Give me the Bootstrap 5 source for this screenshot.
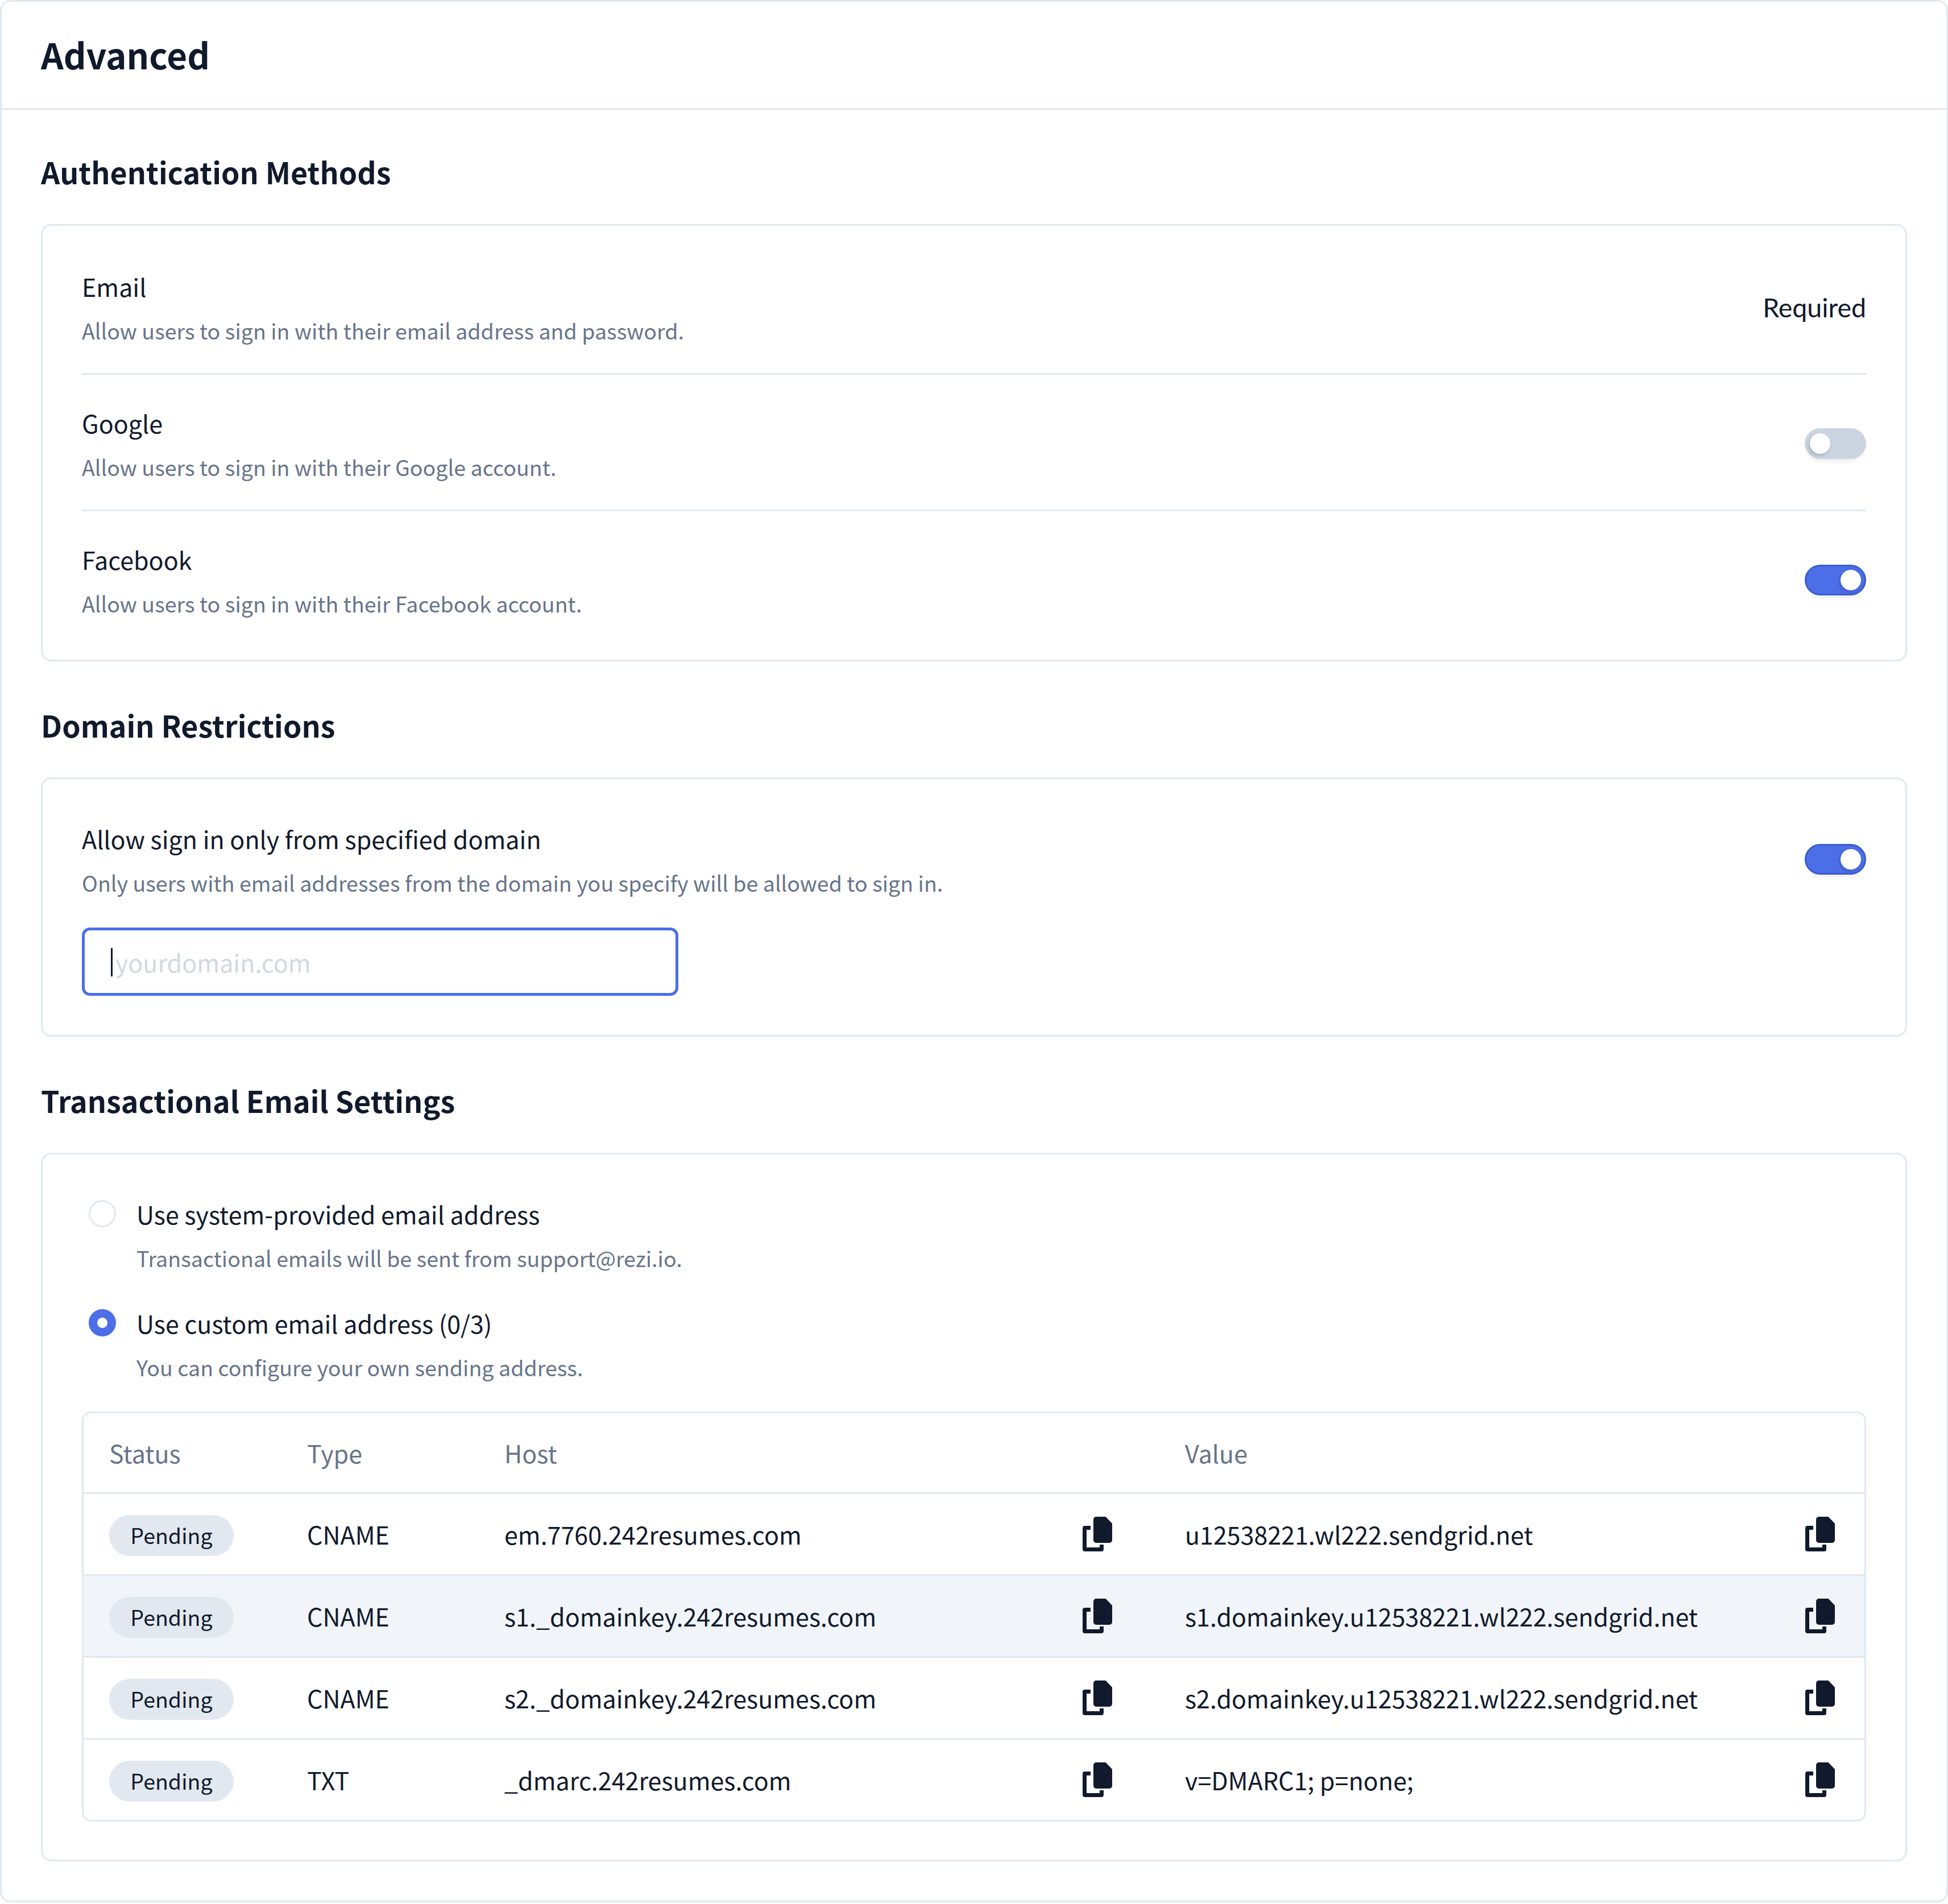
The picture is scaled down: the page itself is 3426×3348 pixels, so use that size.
<!DOCTYPE html>
<html lang="en">
<head>
    <meta charset="UTF-8">
    <meta name="viewport" content="width=device-width, initial-scale=1.0">
    <title>Advanced</title>
    <link href="https://cdn.jsdelivr.net/npm/bootstrap@5.3.0/dist/css/bootstrap.min.css" rel="stylesheet">
    <style>
        body { background: #fff; color: #111a2c; font-family: "Noto Sans CJK SC", "Noto Sans", sans-serif; font-size: 43px; line-height: 76px; }

        .page-panel { --bs-card-border-width: 3px; --bs-card-border-color: #e2e8f0; --bs-card-border-radius: 18px; --bs-card-inner-border-radius: 15px; }
        .page-panel > .card-header { background: #fff; border-bottom: 3px solid #e2e8f0; height: 190px; padding: 0 72px 4px; display: flex; align-items: center; }
        .page-title { font-size: 62px; font-weight: 700; line-height: 88px; margin: 0; margin-left: -3px; }
        .page-panel > .card-body { padding: 73px 69px 69px; }

        .section-title { font-size: 52px; font-weight: 700; line-height: 72px; margin: 0 0 56px; }
        .box { --bs-card-border-width: 3px; --bs-card-border-color: #e2e8f0; --bs-card-border-radius: 18px; margin-bottom: 76px; }
        .box:last-child { margin-bottom: 0; }
        .box-auth { padding: 22px 69px 24px; }
        .box-domain { padding: 66px 69px 69px; }
        .box-mail { padding: 66px 69px 67px; }

        .method-row { padding: 46px 0 37px; border-bottom: 3px solid #e2e8f0; }
        .method-row:last-child { border-bottom: 0; }
        .opt-label { font-size: 43px; line-height: 76px; }
        .opt-hint { font-size: 37.6px; line-height: 76px; color: #67748a; margin-top: 2px; }
        .required-text { font-family: Lato, sans-serif; font-size: 46.5px; margin-bottom: 4px; }
        .form-switch { margin-bottom: 4px !important; }

        .form-switch .switcher { width: 108px; height: 54px; margin: 0; float: none; border: 0; background-color: #cbd5e1; border-radius: 27px;
            background-size: 54px 54px; background-position: left 0 center;
            background-image: url("data:image/svg+xml,%3csvg xmlns='http://www.w3.org/2000/svg' viewBox='0 0 54 54'%3e%3cdefs%3e%3cfilter id='b' x='-50%25' y='-50%25' width='200%25' height='200%25'%3e%3cfeGaussianBlur stdDeviation='3'/%3e%3c/filter%3e%3c/defs%3e%3ccircle cx='25' cy='30' r='18' fill='%230f172a' fill-opacity='.18' filter='url(%23b)'/%3e%3ccircle cx='27' cy='27' r='18' fill='%23fff'/%3e%3c/svg%3e");
            box-shadow: 0 8px 12px -6px rgba(15, 23, 42, .1); }
        .form-switch .switcher:checked { background-color: #4c6fe8; border: 3px solid #3a5cd2; background-position: right -3px center;
            background-image: url("data:image/svg+xml,%3csvg xmlns='http://www.w3.org/2000/svg' viewBox='0 0 54 54'%3e%3cdefs%3e%3cfilter id='b' x='-50%25' y='-50%25' width='200%25' height='200%25'%3e%3cfeGaussianBlur stdDeviation='3'/%3e%3c/filter%3e%3c/defs%3e%3ccircle cx='25' cy='30' r='18' fill='%230f172a' fill-opacity='.18' filter='url(%23b)'/%3e%3ccircle cx='27' cy='27' r='18' fill='%23fff'/%3e%3c/svg%3e"); }
        .form-switch .switcher:focus { box-shadow: 0 8px 12px -6px rgba(15, 23, 42, .1); border-color: #3a5cd2; }

        .domain-field { width: 1049px; margin-top: 41px; }
        .domain-field .form-control { height: 120px; border: 5px solid #4c6fe8; border-radius: 14px; padding: 0 54px; font-size: 43px; box-shadow: none; color: #111a2c; }
        .domain-field .form-control::placeholder { color: #d3d8e1; }
        .text-caret { position: absolute; left: 51px; top: 36px; width: 3px; height: 50px; background: #111a2c; }

        .pick-row { gap: 36px; margin-left: 12px; margin-bottom: 38px; }
        .pick-row .form-check-input { width: 48px; height: 48px; margin: 14px 0 0; flex: none; border: 3px solid #e2e8f0; }
        .pick-row .form-check-input:checked { background-color: #4c6fe8; border-color: #4c6fe8; background-image: radial-gradient(circle, #fff 8.5px, transparent 9.5px); }

        .record-wrap { border: 3px solid #e2e8f0; border-radius: 16px; overflow: hidden; margin-top: 2px; }
        .record-table { table-layout: fixed; width: 100%; margin: 0; --bs-table-border-color: #e2e8f0; font-size: 43px; }
        .record-table th, .record-table td { padding: 0 0 0 48px; vertical-align: middle; border-bottom: 3px solid #e2e8f0; color: #111a2c; background: transparent; box-shadow: none; line-height: 76px; }
        .record-table th { height: 140px; color: #67748a; font-weight: 400; }
        .record-table td { height: 144px; }
        .record-table tr:last-child td { border-bottom: 0; height: 143px; }
        .record-table th:first-child, .record-table td:first-child { padding-left: 45px; }
        .record-table tr.row-hover td { background: #f1f5f9; }
        .col-status { width: 345px; }
        .col-type { width: 347px; }
        .col-host { width: 1197px; }
        .cell-host { padding-right: 80px !important; }
        .cell-value { padding-right: 52px !important; }
        .status-pill { display: inline-block; background: #e2e8f0; border-radius: 36px; height: 72px; line-height: 70px; width: 219px; text-align: center; font-size: 37.6px; }
        .copy-icon { width: 52px; height: 61px; fill: #111a2c; flex: none; }
    </style>
</head>
<body>
    <div class="card page-panel">
        <div class="card-header">
            <h1 class="page-title">Advanced</h1>
        </div>
        <div class="card-body">

            <h2 class="section-title">Authentication Methods</h2>
            <div class="card box box-auth">
                <div class="method-row d-flex justify-content-between align-items-center">
                    <div>
                        <div class="opt-label">Email</div>
                        <div class="opt-hint">Allow users to sign in with their email address and password.</div>
                    </div>
                    <span class="required-text">Required</span>
                </div>
                <div class="method-row d-flex justify-content-between align-items-center">
                    <div>
                        <div class="opt-label">Google</div>
                        <div class="opt-hint">Allow users to sign in with their Google account.</div>
                    </div>
                    <div class="form-check form-switch m-0 p-0 d-flex"><input class="form-check-input switcher" type="checkbox" aria-label="Google"></div>
                </div>
                <div class="method-row d-flex justify-content-between align-items-center">
                    <div>
                        <div class="opt-label">Facebook</div>
                        <div class="opt-hint">Allow users to sign in with their Facebook account.</div>
                    </div>
                    <div class="form-check form-switch m-0 p-0 d-flex"><input class="form-check-input switcher" type="checkbox" aria-label="Facebook" checked></div>
                </div>
            </div>

            <h2 class="section-title">Domain Restrictions</h2>
            <div class="card box box-domain">
                <div class="d-flex justify-content-between align-items-center">
                    <div>
                        <div class="opt-label">Allow sign in only from specified domain</div>
                        <div class="opt-hint">Only users with email addresses from the domain you specify will be allowed to sign in.</div>
                    </div>
                    <div class="form-check form-switch m-0 p-0 d-flex"><input class="form-check-input switcher" type="checkbox" aria-label="Domain restriction" checked></div>
                </div>
                <div class="domain-field position-relative">
                    <input class="form-control" type="text" placeholder="yourdomain.com">
                    <span class="text-caret"></span>
                </div>
            </div>

            <h2 class="section-title">Transactional Email Settings</h2>
            <div class="card box box-mail">
                <div class="pick-row d-flex">
                    <input class="form-check-input" type="radio" name="mailSource" aria-label="System address">
                    <div>
                        <div class="opt-label">Use system-provided email address</div>
                        <div class="opt-hint">Transactional emails will be sent from support@rezi.io.</div>
                    </div>
                </div>
                <div class="pick-row d-flex">
                    <input class="form-check-input" type="radio" name="mailSource" aria-label="Custom address" checked>
                    <div>
                        <div class="opt-label">Use custom email address (0/3)</div>
                        <div class="opt-hint">You can configure your own sending address.</div>
                    </div>
                </div>

                <div class="record-wrap">
                    <table class="table record-table">
                        <thead>
                            <tr>
                                <th class="col-status">Status</th>
                                <th class="col-type">Type</th>
                                <th class="col-host">Host</th>
                                <th>Value</th>
                            </tr>
                        </thead>
                        <tbody id="records"></tbody>
                    </table>
                </div>
            </div>

        </div>
    </div>

    <script src="https://cdn.jsdelivr.net/npm/bootstrap@5.3.0/dist/js/bootstrap.bundle.min.js"></script>
    <script>
        const records = [
            ["CNAME", "em.7760.242resumes.com", "u12538221.wl222.sendgrid.net"],
            ["CNAME", "s1._domainkey.242resumes.com", "s1.domainkey.u12538221.wl222.sendgrid.net"],
            ["CNAME", "s2._domainkey.242resumes.com", "s2.domainkey.u12538221.wl222.sendgrid.net"],
            ["TXT", "_dmarc.242resumes.com", "v=DMARC1; p=none;"]
        ];

        const copyIcon = `<svg class="copy-icon" viewBox="0 0 52 61" aria-hidden="true">
            <path d="M14 16v7H7v31h23v-5h7v8a4 4 0 0 1-4 4H4a4 4 0 0 1-4-4V20a4 4 0 0 1 4-4z"/>
            <path d="M24 0h16.5L52 12v29a5 5 0 0 1-5 5H24a5 5 0 0 1-5-5V5a5 5 0 0 1 5-5z"/>
        </svg>`;

        document.getElementById("records").innerHTML = records.map((r, i) => `
            <tr class="${i === 1 ? "row-hover" : ""}">
                <td><span class="status-pill">Pending</span></td>
                <td>${r[0]}</td>
                <td class="cell-host"><div class="d-flex justify-content-between align-items-center"><span>${r[1]}</span>${copyIcon}</div></td>
                <td class="cell-value"><div class="d-flex justify-content-between align-items-center"><span>${r[2]}</span>${copyIcon}</div></td>
            </tr>`).join("");
    </script>
</body>
</html>
